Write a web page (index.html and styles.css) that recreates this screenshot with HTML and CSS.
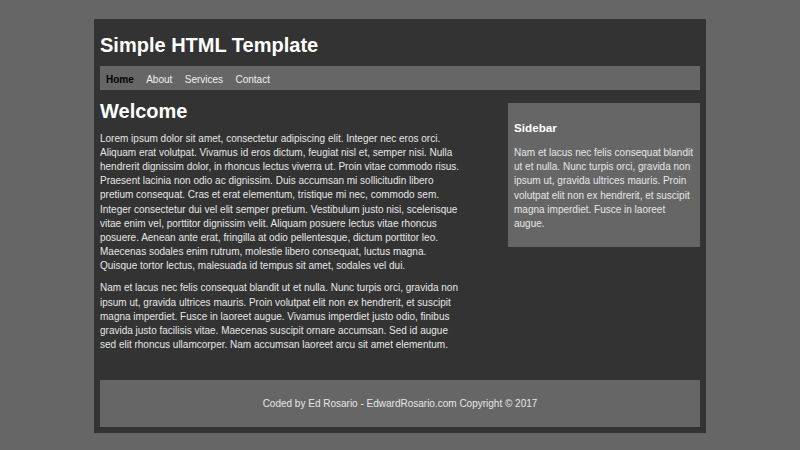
FILE: index.html
```html
<!DOCTYPE html>
<html lang="en">
<head>
<meta charset="utf-8">
<title>Simple HTML Template</title>
<link rel="stylesheet" href="styles.css">
</head>
<body>
<div class="wrapper">
  <header class="header">
    <h1 class="site-title">Simple HTML Template</h1>
    <nav class="nav">
      <a class="nav-link active" href="#">Home</a>
      <a class="nav-link" href="#">About</a>
      <a class="nav-link" href="#">Services</a>
      <a class="nav-link" href="#">Contact</a>
    </nav>
  </header>
  <div class="content">
    <main class="main">
      <h2 class="page-title">Welcome</h2>
      <p class="text">Lorem ipsum dolor sit amet, consectetur adipiscing elit. Integer nec eros orci. Aliquam erat volutpat. Vivamus id eros dictum, feugiat nisl et, semper nisi. Nulla hendrerit dignissim dolor, in rhoncus lectus viverra ut. Proin vitae commodo risus. Praesent lacinia non odio ac dignissim. Duis accumsan mi sollicitudin libero pretium consequat. Cras et erat elementum, tristique mi nec, commodo sem. Integer consectetur dui vel elit semper pretium. Vestibulum justo nisi, scelerisque vitae enim vel, porttitor dignissim velit. Aliquam posuere lectus vitae rhoncus posuere. Aenean ante erat, fringilla at odio pellentesque, dictum porttitor leo. Maecenas sodales enim rutrum, molestie libero consequat, luctus magna. Quisque tortor lectus, malesuada id tempus sit amet, sodales vel dui.</p>
      <p class="text">Nam et lacus nec felis consequat blandit ut et nulla. Nunc turpis orci, gravida non ipsum ut, gravida ultrices mauris. Proin volutpat elit non ex hendrerit, et suscipit magna imperdiet. Fusce in laoreet augue. Vivamus imperdiet justo odio, finibus gravida justo facilisis vitae. Maecenas suscipit ornare accumsan. Sed id augue sed elit rhoncus ullamcorper. Nam accumsan laoreet arcu sit amet elementum.</p>
    </main>
    <aside class="sidebar">
      <h3 class="sidebar-title">Sidebar</h3>
      <p class="sidebar-text">Nam et lacus nec felis consequat blandit ut et nulla. Nunc turpis orci, gravida non ipsum ut, gravida ultrices mauris. Proin volutpat elit non ex hendrerit, et suscipit magna imperdiet. Fusce in laoreet augue.</p>
    </aside>
  </div>
  <footer class="footer">Coded by Ed Rosario - EdwardRosario.com Copyright © 2017</footer>
</div>
</body>
</html>
```
FILE: styles.css
```css
html, body {
  margin: 0;
  padding: 0;
}
body {
  background: #666;
  font-family: "Liberation Sans", Arial, sans-serif;
  font-size: 10px;
  color: #e6e6e6;
}
.wrapper {
  width: 600px;
  margin: 19px auto 0;
  padding: 6px;
  background: #333;
}
.site-title {
  margin: 9px 0 9px;
  font-size: 20px;
  line-height: 23px;
  color: #fff;
}
.nav {
  display: flex;
  gap: 12.4px;
  background: #666;
  padding: 8px 6px 4.5px;
}
.nav-link {
  color: #f0f0f0;
  text-decoration: none;
  font-size: 10px;
  line-height: 11.5px;
}
.nav-link.active {
  color: #000;
  font-weight: bold;
}
.content {
  display: flex;
  justify-content: space-between;
  align-items: flex-start;
}
.main {
  width: 360px;
}
.page-title {
  margin: 10px 0 8.6px;
  font-size: 20px;
  line-height: 23px;
  color: #fff;
}
.text {
  margin: 0 0 7.8px;
  line-height: 14.2px;
}
.text:last-child {
  margin-bottom: 0;
}
.sidebar {
  width: 180px;
  margin-top: 13px;
  padding: 6px 6px 16px;
  background: #666;
}
.sidebar-title {
  margin: 12.4px 0 11px;
  font-size: 11.7px;
  line-height: 13.5px;
  color: #fff;
}
.sidebar-text {
  margin: 0;
  line-height: 14.2px;
}
.footer {
  margin-top: 28px;
  background: #666;
  text-align: center;
  padding: 17.75px 0;
  line-height: 11.5px;
}
```
